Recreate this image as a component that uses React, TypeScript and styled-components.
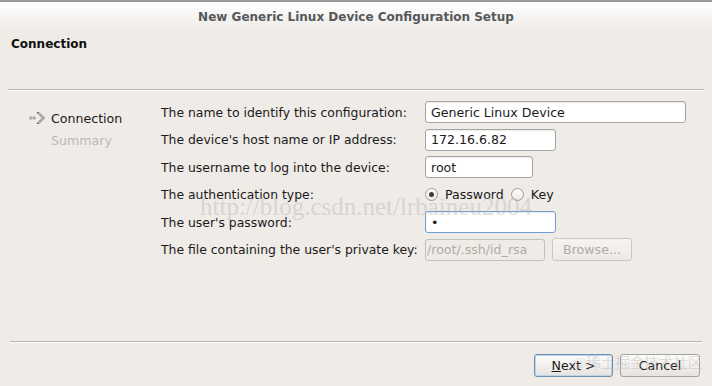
import React from 'react';
import styled, { createGlobalStyle, css } from 'styled-components';

const GlobalStyle = createGlobalStyle`
  html, body {
    margin: 0;
    padding: 0;
    background: #efebe7;
  }
  body {
    font-family: "DejaVu Sans", "Liberation Sans", sans-serif;
    font-size: 12px;
    color: #1a1a1a;
  }
`;

const Window = styled.div`
  position: relative;
  width: 712px;
  height: 386px;
  background: #efebe7;
  overflow: hidden;
  display: flex;
  flex-direction: column;
`;

const TitleBar = styled.div`
  height: 29px;
  border-top: 2px solid #9c9a98;
  background: linear-gradient(#ffffff, #f4f2ef 60%, #efebe7);
  display: flex;
  align-items: center;
  justify-content: center;
  font-weight: bold;
  color: #55585a;
  font-size: 12px;
`;

const PageHeader = styled.div`
  height: 52px;
  padding: 6px 11px 0;
  font-weight: bold;
  color: #101010;
`;

const Divider = styled.div<{ $inset?: number }>`
  height: 0;
  border-top: 1px solid #b7b3ae;
  border-bottom: 1px solid #ffffff;
  margin: 0 ${(p) => p.$inset ?? 8}px 0 ${(p) => p.$inset ?? 8}px;
`;

const Body = styled.div`
  flex: 1;
  display: grid;
  grid-template-columns: 161px 1fr;
  padding-top: 10px;
`;

const Steps = styled.div`
  display: flex;
  flex-direction: column;
  gap: 6px;
  padding: 9px 0 0 29px;
`;

const Step = styled.div<{ $active?: boolean }>`
  display: flex;
  align-items: center;
  gap: 5px;
  font-size: 12.6px;
  height: 16px;
  color: ${(p) => (p.$active ? '#1a1a1a' : '#bcb9b6')};
  padding-left: ${(p) => (p.$active ? 0 : 22)}px;
`;

const Form = styled.div`
  display: grid;
  grid-template-columns: 264px 1fr;
  grid-auto-rows: 22px;
  row-gap: 5.6px;
  align-items: center;
`;

const Label = styled.div`
  font-size: 12.4px;
  white-space: nowrap;
`;

const Field = styled.div`
  display: flex;
  align-items: center;
  gap: 7px;
`;

const TextInput = styled.div<{ $width: number; $focused?: boolean; $disabled?: boolean }>`
  box-sizing: border-box;
  width: ${(p) => p.$width}px;
  height: 22px;
  border: 1px solid #a8a49f;
  border-radius: 3px;
  background: #ffffff;
  box-shadow: inset 0 1px 1px rgba(0, 0, 0, 0.08);
  padding: 0 5px;
  display: flex;
  align-items: center;
  font-size: 12.6px;
  color: #1a1a1a;
  ${(p) =>
    p.$focused &&
    css`
      border-color: #6f9fd0;
    `}
  ${(p) =>
    p.$disabled &&
    css`
      background: #efebe7;
      border-color: #c3bfbb;
      color: #aeaba8;
      box-shadow: none;
      padding-left: 1px;
    `}
`;

const RadioGroup = styled.div`
  display: flex;
  align-items: center;
  gap: 7px;
`;

const RadioOption = styled.label`
  display: flex;
  align-items: center;
  gap: 7px;
  font-size: 12.6px;
`;

const RadioDot = styled.span<{ $checked?: boolean }>`
  box-sizing: border-box;
  width: 13px;
  height: 13px;
  border-radius: 50%;
  border: 1px solid #9e9a95;
  background: linear-gradient(#ffffff, #ebe8e4);
  display: flex;
  align-items: center;
  justify-content: center;
  &::after {
    content: '';
    width: 5px;
    height: 5px;
    border-radius: 50%;
    background: ${(p) => (p.$checked ? '#3b3b3b' : 'transparent')};
  }
`;

const Footer = styled.div`
  display: flex;
  justify-content: flex-end;
  gap: 7px;
  padding: 11px 12px 9px 0;
`;

const Button = styled.div<{ $default?: boolean; $disabled?: boolean; $width?: number }>`
  box-sizing: border-box;
  width: ${(p) => p.$width ?? 79}px;
  height: 23px;
  border: 1px solid #a6a29d;
  border-radius: 3px;
  background: linear-gradient(#fdfdfc, #e6e2de);
  display: flex;
  align-items: center;
  justify-content: center;
  font-size: 12.6px;
  color: #1a1a1a;
  ${(p) =>
    p.$default &&
    css`
      border-color: #6d8fb3;
      box-shadow: inset 0 0 0 1px #bcd4ec;
    `}
  ${(p) =>
    p.$disabled &&
    css`
      border-color: #cbc7c3;
      background: linear-gradient(#f6f4f2, #ece9e5);
      color: #aeaba8;
    `}
`;

const Mnemonic = styled.span`
  text-decoration: underline;
`;

const Watermark = styled.div<{ $x: number; $y: number; $size: number }>`
  position: absolute;
  left: ${(p) => p.$x}px;
  top: ${(p) => p.$y}px;
  font-family: "Liberation Serif", "Noto Sans CJK SC", serif;
  font-size: ${(p) => p.$size}px;
  line-height: 1;
  color: rgba(175, 175, 175, 0.4);
  white-space: nowrap;
  pointer-events: none;
`;

const StepArrow = () => (
  <svg width="17" height="14" viewBox="0 0 17 14">
    <circle cx="1.8" cy="7" r="1.2" fill="none" stroke="#8a8785" strokeWidth="0.9" />
    <circle cx="5.2" cy="7" r="1.2" fill="none" stroke="#8a8785" strokeWidth="0.9" />
    <path d="M8 1.5 L13.5 7 L8 12.5 L10 12.5 L15.5 7 L10 1.5 Z" fill="none" stroke="#6f6c6a" strokeWidth="1" strokeLinejoin="round" />
  </svg>
);

export default function App() {
  return (
    <Window>
      <GlobalStyle />
      <TitleBar>New Generic Linux Device Configuration Setup</TitleBar>
      <PageHeader>Connection</PageHeader>
      <Divider />
      <Body>
        <Steps>
          <Step $active>
            <StepArrow />
            Connection
          </Step>
          <Step>Summary</Step>
        </Steps>
        <Form>
          <Label>The name to identify this configuration:</Label>
          <Field>
            <TextInput $width={261}>Generic Linux Device</TextInput>
          </Field>
          <Label>The device's host name or IP address:</Label>
          <Field>
            <TextInput $width={131}>172.16.6.82</TextInput>
          </Field>
          <Label>The username to log into the device:</Label>
          <Field>
            <TextInput $width={108}>root</TextInput>
          </Field>
          <Label>The authentication type:</Label>
          <RadioGroup>
            <RadioOption>
              <RadioDot $checked />
              Password
            </RadioOption>
            <RadioOption>
              <RadioDot />
              Key
            </RadioOption>
          </RadioGroup>
          <Label>The user's password:</Label>
          <Field>
            <TextInput $width={131} $focused>•</TextInput>
          </Field>
          <Label>The file containing the user's private key:</Label>
          <Field>
            <TextInput $width={120} $disabled>/root/.ssh/id_rsa</TextInput>
            <Button $disabled $width={80}>Browse...</Button>
          </Field>
        </Form>
      </Body>
      <Divider $inset={10} />
      <Footer>
        <Button $default $width={79}>
          <Mnemonic>N</Mnemonic>ext &gt;
        </Button>
        <Button $width={80}>Cancel</Button>
      </Footer>
      <Watermark $x={200} $y={194} $size={25}>http://blog.csdn.net/lrbaineu2004</Watermark>
      <Watermark $x={573} $y={356} $size={14.5}>@稀土掘金技术社区</Watermark>
    </Window>
  );
}
